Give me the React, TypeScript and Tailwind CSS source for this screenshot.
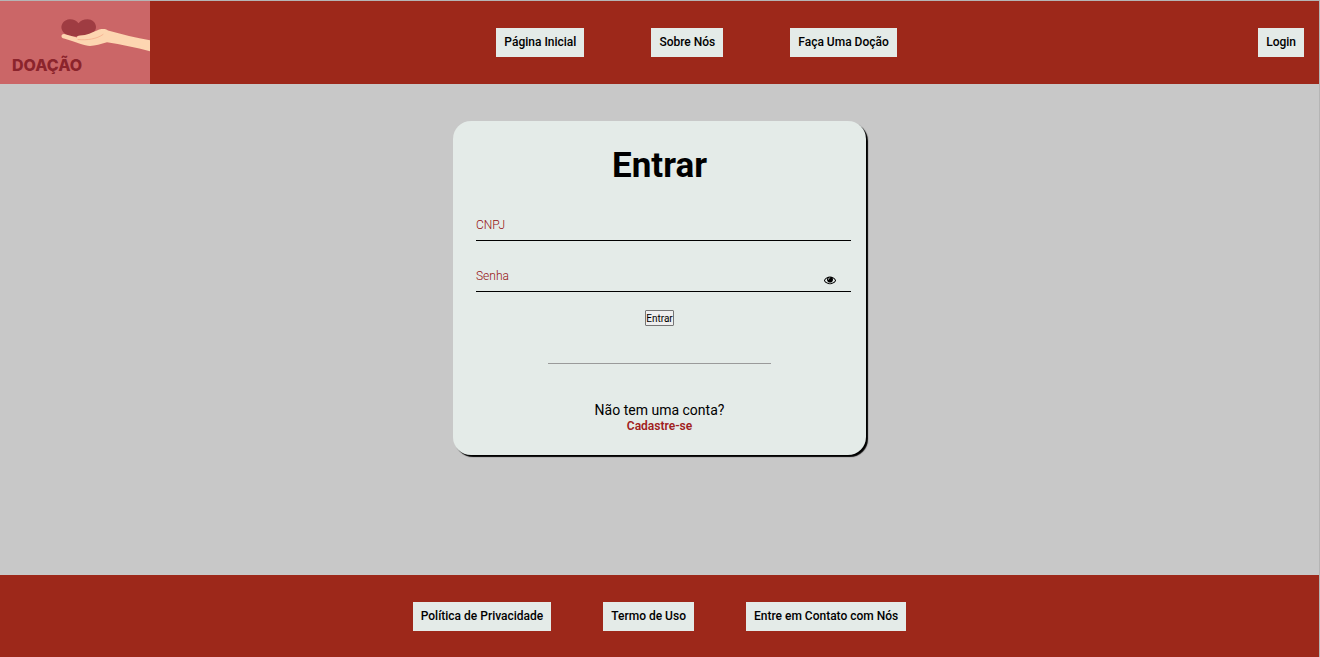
import type { ReactNode } from "react";

function NavLink({ href, children }: { href: string; children: ReactNode }) {
  return (
    <a
      href={href}
      className="flex h-[29px] items-center bg-[#e4ebe8] px-2 pb-px text-xs font-medium whitespace-nowrap text-black"
    >
      {children}
    </a>
  );
}

function Logo() {
  return (
    <svg viewBox="0 0 150 83" className="h-[83px] w-[150px] shrink-0" role="img" aria-label="Doação">
      <rect width="150" height="83" fill="#cb6667" />
      <path
        d="M78.500 22.300C76.500 19.300 73 18 69.500 18.200C64.500 18.800 61.300 22.500 61.400 26.500C61.500 31 66 34 71 35.700L85 35C91 33.500 96 31 96 26C96 21.500 92 18.200 87.500 18.200C83.500 18.200 80.500 19.500 78.500 22.300Z"
        fill="#9f3c42"
      />
      <path
        d="M61.500 35.500C61.200 33.500 63 32.600 65 33.200L77 36.500C76.800 35.200 78 34.700 80 34.500C87 34 92 31.500 97 29.400C101 27.800 105 27.300 108 29.600C122 33.500 136 37 150 39.200V50.200C136 46.500 121 43.500 107 41.200C101 43 95 44.800 90 45C85 45 75 41 64 37.600C62.300 37 61.700 36.500 61.500 35.500Z"
        fill="#fdd6b1"
      />
      <path d="M78 38.500C87 39.500 97 38 103 33.500" fill="none" stroke="#f7b795" strokeWidth="1" strokeLinecap="round" />
      <text x="12" y="70" fill="#8b242c" fontFamily="Inter, sans-serif" fontSize="16" fontWeight="800">
        DOAÇÃO
      </text>
    </svg>
  );
}

function EyeIcon() {
  return (
    <svg viewBox="0 0 1792 1792" className="size-3" fill="currentColor" aria-hidden="true">
      <path d="M1664 960q-152-236-381-353 61 104 61 225 0 185-131.500 316.500t-316.500 131.500-316.500-131.500-131.500-316.500q0-121 61-225-229 117-381 353 133 205 333.500 326.500t434.500 121.500 434.500-121.500 333.500-326.500zm-720-384q0-20-14-34t-34-14q-125 0-214.500 89.500t-89.500 214.500q0 20 14 34t34 14 34-14 14-34q0-86 61-147t147-61q20 0 34-14t14-34zm848 384q0 34-20 69-140 230-376.500 368.500t-499.500 138.500-499.500-139-376.500-368q-20-35-20-69t20-69q140-229 376.500-368t499.500-139 499.500 139 376.500 368q20 35 20 69z" />
    </svg>
  );
}

const field =
  "h-8 w-full border-b border-black bg-transparent text-xs font-light text-black outline-none placeholder:text-[#951010] placeholder:opacity-100";

export default function App() {
  return (
    <div className="flex min-h-screen flex-col border-t border-r border-[#b5b5b5] bg-[#c8c8c8] font-[Roboto,sans-serif] text-black">
      <header className="flex items-center bg-[#9d281a]">
        <a href="#inicio">
          <Logo />
        </a>
        <nav className="flex flex-1 justify-center gap-[67px]">
          <NavLink href="#inicio">Página Inicial</NavLink>
          <NavLink href="#sobre">Sobre Nós</NavLink>
          <NavLink href="#doacao">Faça Uma Doção</NavLink>
        </nav>
        <div className="px-[15px]">
          <NavLink href="#login">Login</NavLink>
        </div>
      </header>

      <main className="flex flex-1 items-start justify-center pt-[37px] pb-10">
        <form
          className="w-full max-w-[413px] rounded-[18px] bg-[#e4ebe8] pt-[22px] pr-[15px] pb-[21px] pl-[23px] shadow-[2px_2px_1px_#000]"
          onSubmit={(e) => e.preventDefault()}
        >
          <h1 className="pr-2 text-center text-[35px] leading-[46px] font-bold">Entrar</h1>
          <div className="mt-5">
            <input aria-label="CNPJ" placeholder="CNPJ" type="text" className={field} />
          </div>
          <div className="relative mt-[19px]">
            <input aria-label="Senha" placeholder="Senha" type="password" className={field} />
            <button type="button" aria-label="Mostrar senha" className="absolute right-[15px] bottom-[6px]">
              <EyeIcon />
            </button>
          </div>
          <div className="flex flex-col items-center pr-2">
            <button
              type="submit"
              className="mt-[18px] flex h-4 items-center rounded-[1px] border border-[#767676] bg-[#efefef] text-[10px]"
            >
              Entrar
            </button>
            <hr className="mt-[37px] w-[223px] border-[#9a9a9a]" />
            <p className="mt-[38px] text-sm leading-4">Não tem uma conta?</p>
            <a href="#cadastro" className="text-xs leading-4 font-semibold text-[#a02020]">
              Cadastre-se
            </a>
          </div>
        </form>
      </main>

      <footer className="flex h-[82px] items-center justify-center gap-[52px] bg-[#9d281a]">
        <NavLink href="#privacidade">Política de Privacidade</NavLink>
        <NavLink href="#termos">Termo de Uso</NavLink>
        <NavLink href="#contato">Entre em Contato com Nós</NavLink>
      </footer>
    </div>
  );
}
